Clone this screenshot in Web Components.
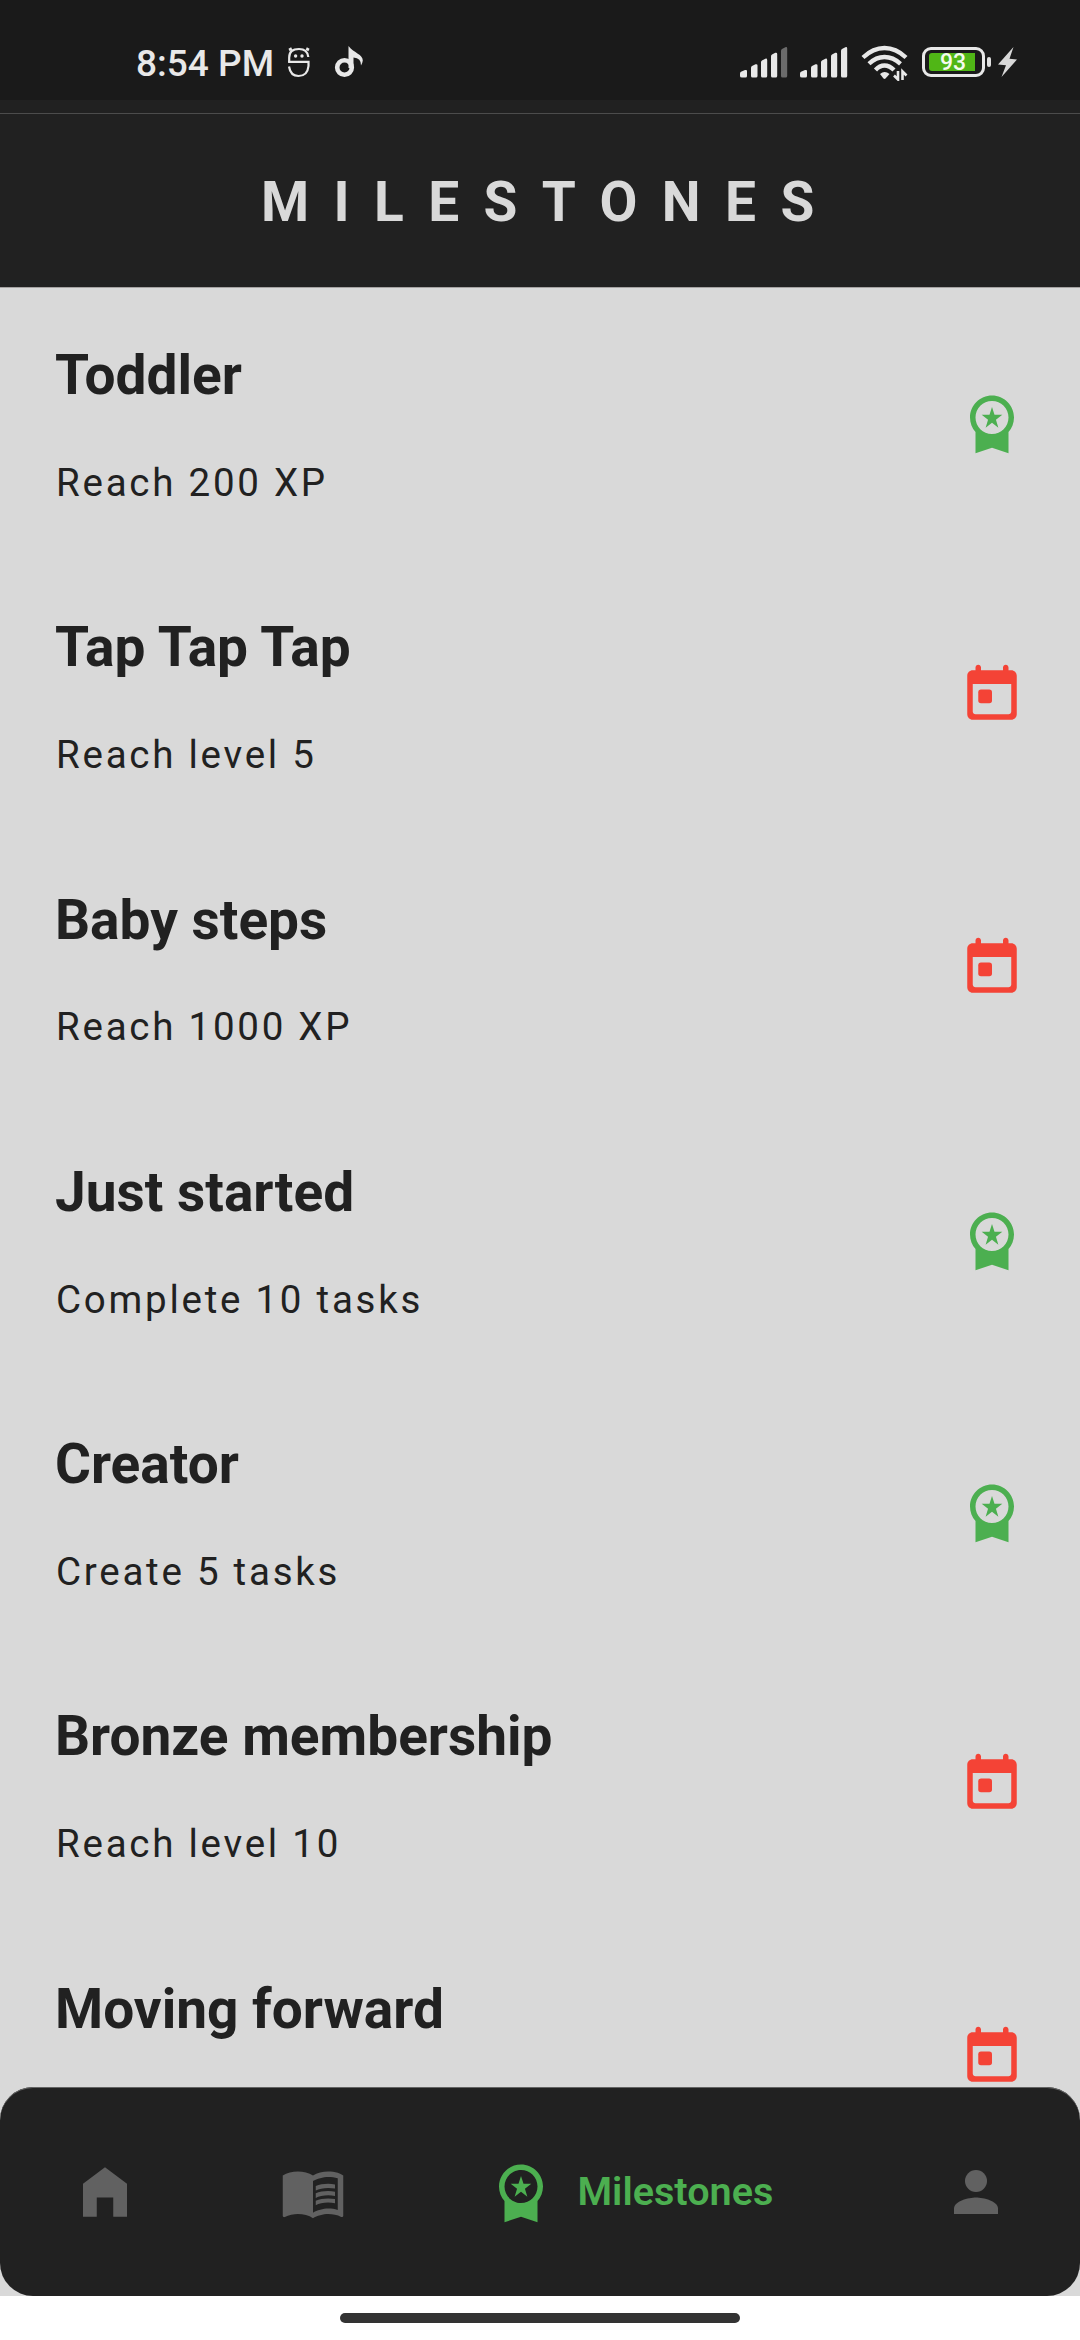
<!DOCTYPE html>
<html lang="en">
<head>
<meta charset="utf-8">
<title>Milestones</title>
<style>
html, body { margin: 0; padding: 0; background: #fff; }
body { width: 1080px; height: 2340px; overflow: hidden; font-family: Roboto, sans-serif; }
</style>
</head>
<body>
<milestones-app></milestones-app>
<script>
const ICONS = {
  award: '<path fill-rule="evenodd" d="M9.68 13.69 12 11.93l2.31 1.76-.88-2.85L15.75 9h-2.84L12 6.19 11.09 9H8.25l2.31 1.84zM20 10c0-4.42-3.58-8-8-8s-8 3.58-8 8c0 2.03.76 3.87 2 5.28V23l6-2 6 2v-7.72c1.24-1.41 2-3.25 2-5.28zM12 4c3.31 0 6 2.69 6 6s-2.69 6-6 6-6-2.69-6-6 2.69-6 6-6z"/>',
  today: '<path fill-rule="evenodd" d="M19 3h-1V2c0-.55-.45-1-1-1s-1 .45-1 1v1H8V2c0-.55-.45-1-1-1s-1 .45-1 1v1H5c-1.11 0-2 .9-2 2v14c0 1.1.89 2 2 2h14c1.1 0 2-.9 2-2V5c0-1.1-.9-2-2-2zm0 15c0 .55-.45 1-1 1H6c-.55 0-1-.45-1-1V8h14v10z"/><rect x="7" y="10" width="5" height="5" rx="1"/>',
  home: '<path d="M4 21V9l8-6 8 6v12h-5v-7H9v7z"/>',
  book: '<path fill-rule="evenodd" d="M21 5c-1.11-.35-2.33-.5-3.5-.5-1.95 0-4.05.4-5.5 1.5-1.45-1.1-3.55-1.5-5.5-1.5S2.45 4.9 1 6v14.65c0 .25.25.5.5.5.1 0 .15-.05.25-.05C3.1 20.45 5.05 20 6.5 20c1.95 0 4.05.4 5.5 1.5 1.35-.85 3.8-1.5 5.5-1.5 1.65 0 3.35.3 4.75 1.05.1.05.15.05.25.05.25 0 .5-.25.5-.5V6c-.6-.45-1.25-.75-2-1zm0 13.5c-1.1-.35-2.3-.5-3.5-.5-1.7 0-4.15.65-5.5 1.5V8c1.35-.85 3.8-1.5 5.5-1.5 1.2 0 2.4.15 3.5.5z"/><path d="M17.5 10.5c.88 0 1.73.09 2.5.26V9.24c-.79-.15-1.64-.24-2.5-.24-1.7 0-3.24.29-4.5.83v1.66c1.13-.64 2.7-.99 4.5-.99zM13 12.49v1.66c1.13-.64 2.7-.99 4.5-.99.88 0 1.73.09 2.5.26V11.9c-.79-.15-1.64-.24-2.5-.24-1.7 0-3.24.3-4.5.83zM17.5 14.33c-1.7 0-3.24.29-4.5.83v1.66c1.13-.64 2.7-.99 4.5-.99.88 0 1.73.09 2.5.26v-1.52c-.79-.16-1.64-.24-2.5-.24z"/>',
  person: '<circle cx="12" cy="8" r="4"/><path d="M4 20v-2c0-2.66 5.33-4 8-4s8 1.34 8 4v2z"/>'
};

class Base extends HTMLElement {
  connectedCallback() {
    if (!this.shadowRoot) this.attachShadow({ mode: 'open' }).innerHTML = this.render();
  }
}

customElements.define('app-icon', class extends Base {
  render() {
    return `<style>:host{display:block;width:66px;height:66px;flex:none}svg{display:block;fill:currentColor}</style>
    <svg width="66" height="66" viewBox="0 0 24 24">${ICONS[this.getAttribute('name')]}</svg>`;
  }
});

customElements.define('signal-bars', class extends Base {
  render() {
    const last = this.hasAttribute('weak') ? '#6b6b6b' : 'currentColor';
    return `<style>:host{display:block;width:48px;height:31px}svg{display:block}</style>
    <svg width="48" height="31" viewBox="0 0 48 31" fill="currentColor">
      <path d="M0 29v-2.5q0-1 1-1.7l4-1.8q2-.5 2 1v5q0 1.500-1.500 1.500H2Q0 30.500 0 29z"/>
      <path d="M11 20.500q0-1 1-1.500l3.500-1.700q2-.5 2 1.200v10.500q0 1.500-1.500 1.500h-3.500q-1.500 0-1.500-1.500z"/>
      <path d="M21 15q0-1 1-1.600l3.300-1.700q1.900-.5 1.900 1.200v16.100q0 1.500-1.500 1.500h-3.200q-1.500 0-1.500-1.500z"/>
      <path d="M31 9.200q0-1 1-1.600l3.300-1.800q1.900-.5 1.900 1.200v22q0 1.500-1.500 1.500h-3.200q-1.500 0-1.500-1.500z"/>
      <path fill="${last}" d="M41 3.500q0-1 1-1.600l3.300-1.700q1.900-.5 1.900 1.200V29q0 1.500-1.500 1.500h-3.200q-1.500 0-1.500-1.500z"/>
    </svg>`;
  }
});

customElements.define('battery-level', class extends Base {
  render() {
    return `<style>
    :host{display:flex;align-items:center;gap:2px;height:30px}
    .case{box-sizing:border-box;width:63px;height:30px;border:3px solid #e8e8e8;border-radius:9px;padding:3px 4px}
    .fill{width:46px;height:18px;border-radius:3px 0 0 3px;background:#50b616;color:#f4fbef;display:flex;align-items:center;justify-content:center}
    .n{font-size:23px;font-weight:500;line-height:18px;padding-left:2px;padding-top:2px}
    .tip{width:4px;height:10px;border-radius:2px;background:#e0e0e0}
    </style><div class="case"><div class="fill"><span class="n"><slot></slot></span></div></div><div class="tip"></div>`;
  }
});

customElements.define('status-bar', class extends Base {
  render() {
    return `<style>
    :host{display:flex;box-sizing:border-box;height:100px;background:#1a1a1a;color:#e8e8e8;padding:0 63px 0 136px;justify-content:space-between;align-items:flex-start}
    .side{display:flex;align-items:flex-start}
    svg{display:block}
    .time{font-size:37px;font-weight:500;line-height:44px;margin-top:42px;width:151px;white-space:nowrap}
    </style>
    <div class="side">
      <span class="time">8:54 PM</span>
      <svg style="margin-top:46px" width="24" height="32" viewBox="0 0 24 32" fill="none" stroke="currentColor" stroke-width="2.200">
        <path d="M2.200 16V11.500Q2.200 3 12 3 20.500 3 21.300 11"/><path d="M4 4.500 2.800 2M20 4.500 21.200 2" stroke-width="3"/>
        <circle cx="8.600" cy="10" r="1.700" fill="currentColor" stroke="none"/><circle cx="15" cy="10" r="1.700" fill="currentColor" stroke="none"/>
        <path d="M1.100 15.800H21.500V20Q20.500 30 11.500 30 3.500 30 2 20.500"/>
      </svg>
      <svg style="margin:46px 0 0 23px" width="30" height="33" viewBox="0 0 30 33">
        <circle cx="10.500" cy="21.500" r="7.300" fill="none" stroke="currentColor" stroke-width="4.600"/>
        <path fill="currentColor" d="M14.500 0C20 7 29 8.500 28.800 14.500Q28.500 17 27 19.500 27.300 12 19.500 11.500V22H14.500z"/>
      </svg>
    </div>
    <div class="side">
      <signal-bars style="margin:47px 12px 0 0" weak></signal-bars>
      <signal-bars style="margin:47px 13px 0 0"></signal-bars>
      <svg style="margin-top:45px" width="48" height="36" viewBox="0 0 48 36" fill="none" stroke="currentColor" stroke-width="4.300">
        <path d="M2 12.500Q12 3 23.500 3T45 12.500"/><path d="M8 18.800Q15 12 23.500 12T39.500 18.800"/><path d="M14.500 25Q18.500 20.500 23.500 20.500T33 25"/>
        <path fill="currentColor" stroke="none" d="M19 29Q23.500 25 28.500 29L24.500 33.500Q23.500 34.300 22.500 33.500z"/>
        <path d="M37 26V34.500L33 30.500M41.500 35V26.500L45.500 30.500" stroke-width="2.600"/>
      </svg>
      <battery-level style="margin:47px 7px 0 13px">93</battery-level>
      <svg style="margin-top:47px" width="19" height="30" viewBox="0 0 19 30" fill="#d8d8d8"><path d="M15.500 0 0 17.500 8 18.200 3.500 30 19 12.500 11.500 11.800z"/></svg>
    </div>`;
  }
});

customElements.define('page-header', class extends Base {
  render() {
    return `<style>
    :host{display:flex;box-sizing:border-box;flex-direction:column;height:188px;background:#212121;border-bottom:1px solid #a5a2a2}
    .rule{height:1px;flex:none;margin-top:13px;background:#4c4c4c}
    h1{margin:0;padding:55px 0 0 261px;font-size:55px;line-height:66px;font-weight:700;letter-spacing:24.400px;color:#d9d9d9;white-space:nowrap}
    </style><div class="rule"></div><h1><slot></slot></h1>`;
  }
});

customElements.define('milestone-row', class extends Base {
  render() {
    const done = this.hasAttribute('done');
    return `<style>
    :host{display:flex;box-sizing:border-box;height:272.250px;flex:none;padding:0 55px;justify-content:space-between;color:#212121}
    h2{margin:0;padding-top:48px;font-size:55px;line-height:66px;font-weight:700;white-space:nowrap}
    p{margin:0;padding:51.800px 0 0 1px;font-size:38.500px;line-height:46px;letter-spacing:2.750px;white-space:nowrap}
    app-icon{margin-top:96.200px}
    </style>
    <div><h2>${this.getAttribute('name')}</h2><p><slot></slot></p></div>
    <app-icon name="${done ? 'award' : 'today'}" style="color:${done ? '#4caf50' : '#f44336'}"></app-icon>`;
  }
});

customElements.define('bottom-nav', class extends Base {
  render() {
    return `<style>
    :host{display:flex;box-sizing:border-box;height:209px;border-radius:33px;background:#212121;box-shadow:inset 0 1px 0 #646464;color:#616161;padding:0 71.500px;align-items:center}
    .book{margin-left:142.500px}
    .on{display:flex;align-items:center;margin-left:142.300px;color:#4caf50;font-size:39.600px;font-weight:600;line-height:46px}
    .on span{margin-left:23.200px;white-space:nowrap}
    .person{margin-left:auto}
    </style>
    <app-icon name="home"></app-icon><app-icon class="book" name="book"></app-icon>
    <div class="on"><app-icon name="award"></app-icon><span><slot></slot></span></div>
    <app-icon class="person" name="person"></app-icon>`;
  }
});

customElements.define('milestones-app', class extends Base {
  render() {
    return `<style>
    :host{display:flex;flex-direction:column;width:1080px;height:2340px;background:#fff;overflow:hidden}
    main{display:flex;flex-direction:column;height:2008px;background:#d9d9d9;flex:none}
    .list{flex:1;min-height:0;overflow:hidden;padding-top:6px}
    bottom-nav{flex:none}
    footer{flex:1;display:flex;justify-content:center;padding-top:17px}
    .pill{width:400px;height:10px;border-radius:5px;background:#333}
    </style>
    <status-bar></status-bar>
    <page-header>MILESTONES</page-header>
    <main>
      <div class="list">
        <milestone-row name="Toddler" done>Reach 200 XP</milestone-row>
        <milestone-row name="Tap Tap Tap">Reach level 5</milestone-row>
        <milestone-row name="Baby steps">Reach 1000 XP</milestone-row>
        <milestone-row name="Just started" done>Complete 10 tasks</milestone-row>
        <milestone-row name="Creator" done>Create 5 tasks</milestone-row>
        <milestone-row name="Bronze membership">Reach level 10</milestone-row>
        <milestone-row name="Moving forward"></milestone-row>
      </div>
      <bottom-nav>Milestones</bottom-nav>
    </main>
    <footer><div class="pill"></div></footer>`;
  }
});
</script>
</body>
</html>
